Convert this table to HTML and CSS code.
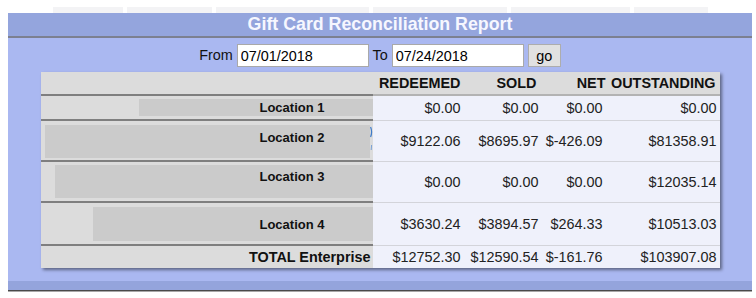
FILE: index.html
```html
<!DOCTYPE html>
<html>
<head>
<meta charset="utf-8">
<title>Gift Card Reconciliation Report</title>
<link rel="stylesheet" href="styles.css">
</head>
<body>
<div class="tabs">
  <span class="tab w1"></span><span class="tab w2"></span><span class="tab w3"></span><span class="tab w4"></span><span class="tab w5"></span><span class="tab w6"></span>
</div>
<div class="panel">
  <div class="title">Gift Card Reconciliation Report</div>
  <div class="body">
    <form class="dates">From <input class="date" type="text" value="07/01/2018"> To <input class="date" type="text" value="07/24/2018"> <button class="go" type="button">go</button></form>
    <table class="report">
      <colgroup>
        <col class="k0"><col class="k1"><col class="k2"><col class="k3"><col class="k4">
      </colgroup>
      <thead>
        <tr>
          <th class="name">&nbsp;</th>
          <th class="h1">REDEEMED</th>
          <th class="h2">SOLD</th>
          <th class="h3">NET</th>
          <th class="h4">OUTSTANDING</th>
        </tr>
      </thead>
      <tbody>
        <tr>
          <td class="name"><div class="loc"><div class="blk r1"><span class="lbl">Location 1</span></div></div></td>
          <td class="num n1">$0.00</td><td class="num n2">$0.00</td><td class="num n3">$0.00</td><td class="num n4">$0.00</td>
        </tr>
        <tr>
          <td class="name"><div class="loc"><div class="blk r2"><span class="lbl">Location 2</span></div><svg class="glyph" width="3" height="33" viewBox="0 0 3 33"><path d="M0.6 2 Q2.6 7 0.6 12" fill="none" stroke="#3f7bc9" stroke-width="1.2"/><path d="M1.6 20 L1.2 25" fill="none" stroke="#7aa2d6" stroke-width="1"/></svg></div></td>
          <td class="num n1">$9122.06</td><td class="num n2">$8695.97</td><td class="num n3">$-426.09</td><td class="num n4">$81358.91</td>
        </tr>
        <tr>
          <td class="name"><div class="loc"><div class="blk r3"><span class="lbl">Location 3</span></div></div></td>
          <td class="num n1">$0.00</td><td class="num n2">$0.00</td><td class="num n3">$0.00</td><td class="num n4">$12035.14</td>
        </tr>
        <tr>
          <td class="name"><div class="loc"><div class="blk r4"><span class="lbl">Location 4</span></div></div></td>
          <td class="num n1">$3630.24</td><td class="num n2">$3894.57</td><td class="num n3">$264.33</td><td class="num n4">$10513.03</td>
        </tr>
        <tr class="total">
          <td class="name tot">TOTAL Enterprise</td>
          <td class="num n1">$12752.30</td><td class="num n2">$12590.54</td><td class="num n3">$-161.76</td><td class="num n4">$103907.08</td>
        </tr>
      </tbody>
    </table>
  </div>
  <div class="foot"></div>
  <div class="foot-shade"></div>
</div>
</body>
</html>
```
FILE: styles.css
```css
html, body {
  margin: 0;
  padding: 0;
  background: #ffffff;
  font-family: "Liberation Sans", Arial, sans-serif;
}

.tabs {
  display: flex;
  gap: 4px;
  margin: 7px 0 0 53px;
  height: 6px;
}
.tab { display: block; height: 6px; background: #f3f3f5; }
.w1 { width: 70px; }
.w2 { width: 85px; }
.w3 { width: 153px; }
.w4 { width: 134px; }
.w5 { width: 119px; }
.w6 { width: 74px; }

.panel {
  margin-left: 8px;
  width: 744px;
}

.title {
  height: 23px;
  line-height: 23px;
  background: #94a5dd;
  border-bottom: 2px solid #7c8090;
  color: #f6f7ff;
  font-weight: bold;
  font-size: 17.8px;
  text-align: center;
}

.body {
  background: #aab8f1;
  padding: 6px 0 13px;
}

.dates {
  margin: 0 0 5px;
  height: 23px;
  line-height: 23px;
  text-align: center;
  font-size: 14.4px;
  color: #111;
}

.date {
  box-sizing: border-box;
  width: 132px;
  height: 23px;
  margin: 0;
  padding: 0 3px;
  border: 1px solid #a9a9a9;
  background: #fff;
  font-family: "Liberation Sans", Arial, sans-serif;
  font-size: 14.4px;
  color: #000;
  vertical-align: top;
}

.go {
  box-sizing: border-box;
  width: 33px;
  height: 23px;
  margin: 0;
  padding: 0;
  border: 1px solid #adadad;
  background: #e1e1e1;
  font-family: "Liberation Sans", Arial, sans-serif;
  font-size: 14.4px;
  color: #000;
  vertical-align: top;
}

.report {
  margin: 0 auto;
  width: 679px;
  table-layout: fixed;
  border-collapse: separate;
  border-spacing: 0;
  box-shadow: 2px 2px 3px rgba(0, 0, 0, 0.45);
  font-size: 14.4px;
}
.k0 { width: 332px; }
.k1 { width: 92px; }
.k2 { width: 77px; }
.k3 { width: 64px; }
.k4 { width: 114px; }

.report th {
  padding: 0;
  height: 22px;
  line-height: 22px;
  background: #dcdcdc;
  color: #111;
  font-weight: bold;
  text-align: right;
  border-bottom: 2px solid #b3b3b3;
}
.report th.name { border-bottom-color: #7f7f7f; }
.h1 { padding-right: 4px !important; }
.h2 { padding-right: 5px !important; }
.h3 { padding-right: 0 !important; }
.h4 { padding-right: 4px !important; }

.report td {
  padding: 0;
}

td.name {
  background: #dcdcdc;
  border-bottom: 2px solid #7f7f7f;
  vertical-align: top;
}

.loc { display: flex; align-items: flex-start; }

.blk {
  flex: 1;
  display: flex;
  justify-content: flex-end;
  background: #cbcbcb;
}

.lbl {
  font-size: 13px;
  font-weight: bold;
  line-height: 17px;
  color: #111;
  padding-right: 48px;
}

.r1 { margin: 3px 0 3px 98px; height: 17px; align-items: center; }
.r2 { margin: 4px 0 2px 4px; height: 33px; align-items: flex-start; }
.r2 .lbl { padding-top: 4px; padding-right: 45px; }
.r3 { margin: 3px 0 3px 14px; height: 33px; align-items: flex-start; }
.r3 .lbl { padding-top: 3px; }
.r4 { margin: 4px 0 3px 52px; height: 34px; align-items: center; }

.glyph { display: block; margin-top: 4px; flex: none; }

td.num {
  background: #eff1fb;
  border-bottom: 1px solid #d3d4da;
  text-align: right;
  vertical-align: middle;
  line-height: 17px;
  color: #222;
}
.n1 { padding-right: 4px !important; }
.n2 { padding-right: 3px !important; }
.n3 { padding-right: 3px !important; }
.n4 { padding-right: 3px !important; }

tr.total td { border-bottom: 0; line-height: 22px; }
td.tot {
  text-align: right;
  font-weight: bold;
  color: #111;
  padding-right: 2px !important;
  vertical-align: middle;
}

.foot {
  height: 9px;
  background: #94a4dc;
  border-bottom: 1px solid #4a4a4a;
}
.foot-shade {
  height: 1px;
  background: #a8a8a8;
}
```
